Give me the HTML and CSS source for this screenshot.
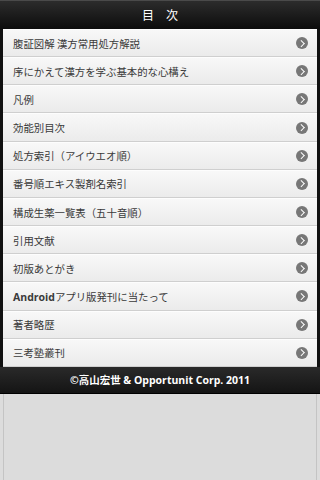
FILE: index.html
```html
<!DOCTYPE html>
<html>
<head>
  <meta charset="utf-8">
  <title>目次</title>
  <link rel="stylesheet" href="styles.css">
</head>
<body>
  <div class="page">
    <div class="top-bar">目　次</div>

    <ul class="menu">
      <li><span>腹証図解 漢方常用処方解説</span><i class="arrow"></i></li>
      <li><span>序にかえて漢方を学ぶ基本的な心構え</span><i class="arrow"></i></li>
      <li><span>凡例</span><i class="arrow"></i></li>
      <li><span>効能別目次</span><i class="arrow"></i></li>
      <li><span>処方索引（アイウエオ順）</span><i class="arrow"></i></li>
      <li><span>番号順エキス製剤名索引</span><i class="arrow"></i></li>
      <li><span>構成生薬一覧表（五十音順）</span><i class="arrow"></i></li>
      <li><span>引用文献</span><i class="arrow"></i></li>
      <li><span>初版あとがき</span><i class="arrow"></i></li>
      <li><span><b>Android</b>アプリ版発刊に当たって</span><i class="arrow"></i></li>
      <li><span>著者略歴</span><i class="arrow"></i></li>
      <li><span>三考塾叢刊</span><i class="arrow"></i></li>
    </ul>

    <div class="bottom-bar">©高山宏世 &amp; Opportunit Corp. 2011</div>
  </div>
  <div class="rest"></div>
</body>
</html>
```

FILE: styles.css
```css
html, body {
  height: 100%;
}

body {
  margin: 0;
  display: flex;
  flex-direction: column;
  background-color: #dcdcdc;
  font-family: "Noto Sans CJK JP", "Noto Sans", sans-serif;
}

.page {
  background-color: #111;
}

.top-bar {
  height: 28px;
  border-top: 1px solid #4a4a4a;
  background: linear-gradient(#2c2c2c, #0c0c0c);
  color: #fff;
  font-size: 12px;
  line-height: 28px;
  text-align: center;
}

.menu {
  list-style: none;
  margin: 0 3px;
  padding: 0;
}

.menu li {
  box-sizing: border-box;
  height: 28.17px;
  display: flex;
  align-items: center;
  justify-content: space-between;
  padding: 0 9px 0 10px;
  border-bottom: 1px solid #cfcfcf;
  border-top: 1px solid #fdfdfd;
  background: linear-gradient(#f8f8f8, #ebebeb);
  color: #3a3a3a;
  font-size: 10.4px;
}

.menu li b {
  font-family: "Open Sans", sans-serif;
  font-size: 10.5px;
}

.arrow {
  width: 12px;
  height: 12px;
  border-radius: 50%;
  background-color: #777;
  position: relative;
}

.arrow::after {
  content: "";
  position: absolute;
  left: 3px;
  top: 3.5px;
  width: 3.5px;
  height: 3.5px;
  border-top: 1.6px solid #fff;
  border-right: 1.6px solid #fff;
  transform: rotate(45deg);
}

.bottom-bar {
  height: 26px;
  border-bottom: 1px solid #000;
  background: linear-gradient(#2a2a2a, #141414);
  color: #fff;
  font-family: "Open Sans", "Noto Sans CJK JP", sans-serif;
  font-weight: bold;
  font-size: 10.5px;
  line-height: 26px;
  text-align: center;
}

.rest {
  flex: 1;
  margin: 0 3px;
  border-left: 1px solid #c4c4c4;
  border-right: 1px solid #c4c4c4;
}
```
